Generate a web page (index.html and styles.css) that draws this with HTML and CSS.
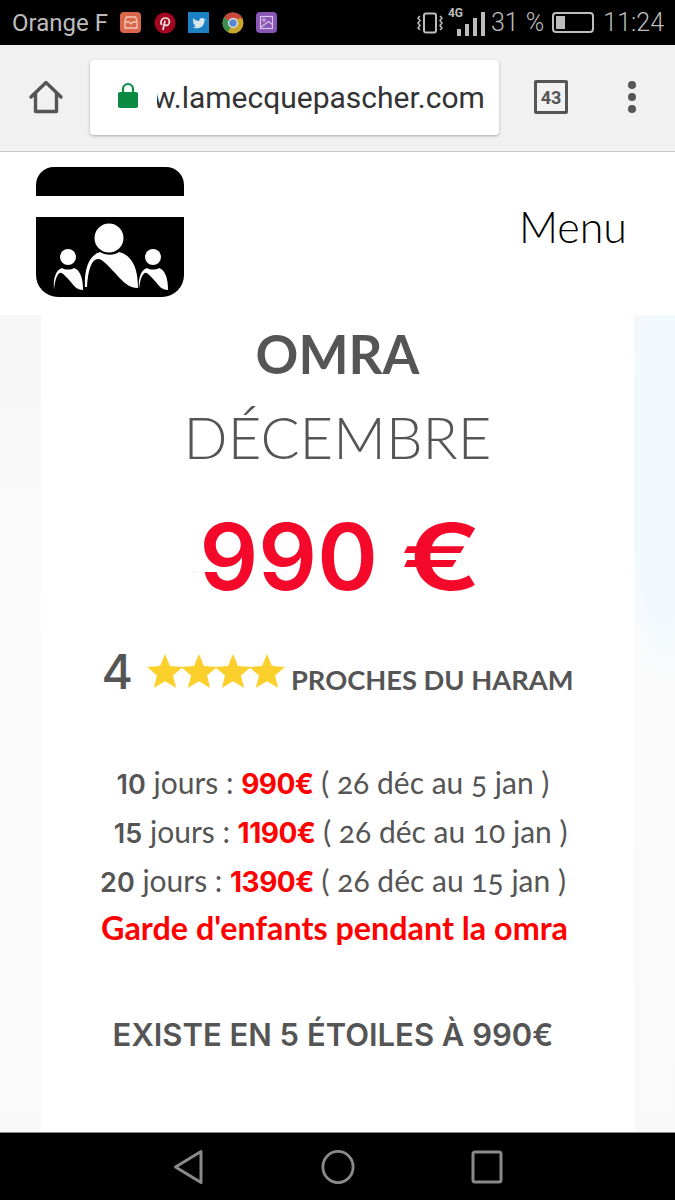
FILE: index.html
```html
<!DOCTYPE html>
<html lang="fr">
<head>
    <meta charset="UTF-8">
    <meta name="viewport" content="width=device-width, initial-scale=1.0">
    <title>OMRA Décembre</title>
    <link rel="stylesheet" href="styles.css">
</head>
<body>
    <!-- Status bar -->
    <div class="status-bar">
        <div class="status-left">
            <span class="carrier">Orange F</span>
            <svg class="notif" viewBox="0 0 22 22"><rect width="21" height="21" rx="4" fill="#d9654a"/><path d="M5 9l1.500-4h9l1.500 4v7H5zM5 10h4l2 2 2-2h4" fill="none" stroke="#f3c9b8" stroke-width="1.300"/></svg>
            <svg class="notif" viewBox="0 0 22 22"><circle cx="11" cy="11" r="10.500" fill="#a3071f"/><path d="M8 13c-2-2-1-7 3.500-7 3.500 0 4.500 3 3.500 5.500-1 2.300-3.500 2.500-4.500 1M11 8.500L9 18" fill="none" stroke="#f4e4e4" stroke-width="1.700"/></svg>
            <svg class="notif" viewBox="0 0 22 22"><rect width="21" height="21" fill="#1b80c4"/><path d="M4 15c5 3 12 1 12.500-6.500l1.500-1.500-1.800.3c-1-2-5-2-5 1.700-2.500 0-4.500-1-6-2.700-.7 1.500-.2 3 1 4l-1.200-.2c0 1.300 1 2.300 2.300 2.800h-1.300c.4 1 1.300 1.500 2.400 1.600-1.300.8-2.600 1-4.400.5z" fill="#d9e6ee"/></svg>
            <svg class="notif" viewBox="0 0 22 22"><circle cx="11" cy="11" r="10.500" fill="#c8a52c"/><path d="M11 11L2 5.500A10.500 10.500 0 0 1 20.500 6.500H11z" fill="#c9473c"/><path d="M11 11L6 20A10.500 10.500 0 0 1 2 5.500z" fill="#3d9150"/><circle cx="11" cy="11" r="5" fill="#e8e8e8"/><circle cx="11" cy="11" r="3.700" fill="#5a86d8"/></svg>
            <svg class="notif" viewBox="0 0 22 22"><rect width="21" height="21" rx="4" fill="#8a55b5"/><rect x="4.500" y="4.500" width="12" height="12" fill="none" stroke="#d8c5e6" stroke-width="1.200"/><circle cx="8" cy="8" r="1.300" fill="none" stroke="#d8c5e6"/><path d="M4.500 15.500l8-6 4 3" fill="none" stroke="#d8c5e6" stroke-width="1.200"/></svg>
        </div>
        <div class="status-right">
            <svg class="vibrate" viewBox="0 0 26 24"><rect x="7" y="2.500" width="12" height="19" rx="2" fill="none" stroke="#bdbdbd" stroke-width="2"/><path d="M3 5l-2 2 2 2.500-2 2.500 2 2.500-2 2.500 2 2M23 5l2 2-2 2.500 2 2.500-2 2.500 2 2.500-2 2" fill="none" stroke="#bdbdbd" stroke-width="1.500"/></svg>
            <div class="signal">
                <span class="net">4G</span>
                <span class="bar bar-1"></span>
                <span class="bar bar-2"></span>
                <span class="bar bar-3"></span>
                <span class="bar bar-4"></span>
            </div>
            <span class="status-text percent">31 %</span>
            <div class="battery"><span class="battery-level"></span></div>
            <span class="status-text">11:24</span>
        </div>
    </div>

    <!-- Browser toolbar -->
    <div class="toolbar">
        <svg class="home-icon" viewBox="0 0 36 36"><path d="M3 18L18 3.500 33 18M7.500 15v17.500h21V15" fill="none" stroke="#555" stroke-width="3.400" stroke-linejoin="round" stroke-linecap="round"/></svg>
        <div class="url-box">
            <svg class="lock" viewBox="0 0 20 26"><path d="M5 11V7a5 5 0 0 1 10 0v4" fill="none" stroke="#0b8a43" stroke-width="2.200"/><rect y="10" width="20" height="16" rx="2" fill="#0b8a43"/></svg>
            <div class="url-clip"><span class="url-text">w.lamecquepascher.com</span></div>
        </div>
        <div class="tabs-count">43</div>
        <div class="dots"><span></span><span></span><span></span></div>
    </div>

    <!-- Site header -->
    <header class="site-header">
        <svg class="logo" viewBox="0 0 148 131">
            <path d="M0 29V18A18 18 0 0 1 18 0h112a18 18 0 0 1 18 18v11z" fill="#000"/>
            <path d="M0 50h148v58a22 22 0 0 1-22 22H22a22 22 0 0 1-22-22z" fill="#000"/>
            <circle cx="73" cy="71" r="14.500" fill="#fff"/>
            <path d="M49 120c-1-20 5-32 15-35 4 3 14 4 19 0 12 3 19 14 19 36-9 0-15-6-22-14-8-8-13-15-18-15-6 0-10 10-11 28z" fill="#fff"/>
            <circle cx="32" cy="90" r="8" fill="#fff"/>
            <path d="M18 122c-1-11 2-19 8-21 3 2 9 2 12 0 6 2 9 10 9 22-6 0-9-4-13-9-4-4-8-9-10-8-3 1-5 7-6 16z" fill="#fff"/>
            <circle cx="117" cy="90" r="8" fill="#fff"/>
            <path d="M103 122c-1-11 2-19 8-21 3 2 9 2 12 0 6 2 9 10 9 22-6 0-9-4-13-9-4-4-8-9-10-8-3 1-5 7-6 16z" fill="#fff"/>
        </svg>
        <a class="menu-link" href="#">Menu</a>
    </header>

    <!-- Main Content -->
    <main class="page-bg">
        <section class="card">
            <h1 class="title">OMRA</h1>
            <h2 class="month">DÉCEMBRE</h2>
            <div class="price">990 <span class="euro">€</span></div>

            <div class="hotel">
                <span class="hotel-num">4</span>
                <div class="stars">
                    <svg class="star" viewBox="0 0 36 36"><path d="M18 1l5 12 13 1-10 8.500 3.200 12.500L18 28.300 6.800 35 10 22.500 0 14l13-1z"/></svg>
                    <svg class="star" viewBox="0 0 36 36"><path d="M18 1l5 12 13 1-10 8.500 3.200 12.500L18 28.300 6.800 35 10 22.500 0 14l13-1z"/></svg>
                    <svg class="star" viewBox="0 0 36 36"><path d="M18 1l5 12 13 1-10 8.500 3.200 12.500L18 28.300 6.800 35 10 22.500 0 14l13-1z"/></svg>
                    <svg class="star" viewBox="0 0 36 36"><path d="M18 1l5 12 13 1-10 8.500 3.200 12.500L18 28.300 6.800 35 10 22.500 0 14l13-1z"/></svg>
                </div>
                <span class="hotel-text">PROCHES DU HARAM</span>
            </div>

            <ul class="dates">
                <li><b>10</b> jours : <b class="red">990€</b> ( 26 déc au 5 jan )</li>
                <li>&nbsp;&nbsp;<b>15</b> jours : <b class="red">1190€</b> ( 26 déc au 10 jan )</li>
                <li><b>20</b> jours : <b class="red">1390€</b> ( 26 déc au 15 jan )</li>
            </ul>
            <p class="childcare">Garde d'enfants pendant la omra</p>
            <p class="five-stars">EXISTE EN 5 ÉTOILES À 990€</p>
        </section>
    </main>

    <!-- Navigation bar -->
    <nav class="nav-bar">
        <svg class="nav-icon" viewBox="0 0 34 36"><path d="M29 2.500v31L3.500 18z" fill="none" stroke="#8a8a8a" stroke-width="3" stroke-linejoin="round"/></svg>
        <svg class="nav-icon" viewBox="0 0 36 36"><ellipse cx="18" cy="18" rx="16" ry="16.500" fill="none" stroke="#8a8a8a" stroke-width="3"/></svg>
        <svg class="nav-icon" viewBox="0 0 34 36"><rect x="3" y="3" width="28" height="30" rx="2" fill="none" stroke="#8a8a8a" stroke-width="3"/></svg>
    </nav>
</body>
</html>
```

FILE: styles.css
```css
/* General Styles */
* {
    box-sizing: border-box;
}

body {
    background-color: #000;
    font-family: "Lato", "Open Sans", sans-serif;
    margin: 0;
    padding: 0;
    height: 1200px;
    overflow: hidden;
    display: flex;
    flex-direction: column;
}

/* Status bar */
.status-bar {
    height: 45px;
    flex: none;
    background-color: #000;
    color: #bdbdbd;
    font-family: "Roboto", sans-serif;
    display: flex;
    justify-content: space-between;
    align-items: center;
    padding: 0 11px 0 12px;
}

.status-left,
.status-right {
    display: flex;
    align-items: center;
}

.carrier {
    font-size: 24px;
    margin-right: 12px;
}

.notif {
    width: 22px;
    height: 22px;
    margin-right: 12px;
}

.vibrate {
    width: 26px;
    height: 24px;
    margin-right: 5px;
}

.signal {
    position: relative;
    width: 37px;
    height: 26px;
    display: flex;
    align-items: flex-end;
    gap: 4px;
    padding-left: 9px;
}

.net {
    position: absolute;
    left: 0;
    top: -4px;
    font-size: 12px;
    font-weight: 700;
}

.bar {
    width: 4px;
    background-color: #bdbdbd;
}

.bar-1 { height: 7px; }
.bar-2 { height: 12px; }
.bar-3 { height: 18px; }
.bar-4 { height: 24px; }

.status-text {
    font-size: 25px;
    font-weight: 300;
}

.percent {
    margin-left: 6px;
    word-spacing: 1px;
}

.battery {
    width: 42px;
    height: 21px;
    margin: 0 9px 0 8px;
    border: 2px solid #bdbdbd;
    border-radius: 4px;
    padding: 2px;
}

.battery-level {
    display: block;
    width: 9px;
    height: 100%;
    background-color: #bdbdbd;
}

/* Browser toolbar */
.toolbar {
    height: 107px;
    flex: none;
    background-color: #f1f1f1;
    border-bottom: 1px solid #c9c9c9;
    display: flex;
    align-items: center;
    padding: 0 0 2px 28px;
}

.home-icon {
    width: 36px;
    height: 36px;
}

.url-box {
    width: 409px;
    height: 75px;
    margin-left: 26px;
    background-color: #fff;
    border-radius: 4px;
    box-shadow: 0 1px 3px rgba(0, 0, 0, 0.3);
    display: flex;
    align-items: center;
    padding-left: 28px;
    overflow: hidden;
}

.lock {
    width: 20px;
    height: 26px;
    margin-top: -4px;
    flex: none;
}

.url-clip {
    margin-left: 19px;
    width: 330px;
    overflow: hidden;
}

.url-text {
    display: block;
    margin-left: -4px;
    font-family: "Roboto", sans-serif;
    font-size: 30px;
    color: #333;
    white-space: nowrap;
}

.tabs-count {
    width: 34px;
    height: 34px;
    margin-left: 35px;
    border: 3px solid #555;
    border-radius: 2px;
    color: #555;
    font-family: "Roboto", sans-serif;
    font-size: 18px;
    font-weight: 700;
    display: flex;
    align-items: center;
    justify-content: center;
}

.dots {
    margin-left: 60px;
    display: flex;
    flex-direction: column;
    gap: 4px;
}

.dots span {
    width: 8px;
    height: 8px;
    border-radius: 50%;
    background-color: #555;
}

/* Site header */
.site-header {
    height: 163px;
    flex: none;
    background-color: #fff;
    display: flex;
    justify-content: space-between;
    align-items: flex-start;
    padding: 15px 48px 0 36px;
}

.logo {
    width: 148px;
    height: 131px;
}

.menu-link {
    color: #000;
    font-size: 43px;
    font-weight: 300;
    line-height: 52px;
    margin-top: 34px;
    text-decoration: none;
}

/* Page */
.page-bg {
    flex: 1;
    min-height: 0;
    display: flex;
    justify-content: center;
    background-color: #f9f9f9;
    background-image:
        radial-gradient(ellipse 50px 220px at 665px 150px, #f2f9fd 0%, #f2f9fd 70%, transparent 100%),
        linear-gradient(180deg, #f6f6f6 0%, #fbfbfb 35%, #f9f9f9 100%);
}

.card {
    width: 593px;
    background-color: #fff;
    color: #555;
    text-align: center;
    padding-top: 7px;
}

.title {
    font-size: 53px;
    font-weight: 700;
    line-height: 64px;
    margin: 0;
}

.month {
    font-size: 58px;
    font-weight: 300;
    line-height: 70px;
    margin: 16px 0 0;
}

.price {
    font-family: "Inter", sans-serif;
    color: #f5092a;
    font-size: 92px;
    font-weight: 600;
    line-height: 110px;
    margin-top: 30px;
    padding-left: 5px;
}

.euro {
    display: inline-block;
    margin: 0 8px 0 9px;
    transform: scaleX(1.3);
}

.hotel {
    display: flex;
    justify-content: center;
    align-items: center;
    margin-top: 31px;
    height: 56px;
}

.hotel-num {
    font-family: "Inter", sans-serif;
    font-size: 48px;
    font-weight: 500;
    margin-right: 1px;
}

.stars {
    display: flex;
    margin: 0 8px 0 13px;
}

.star {
    width: 36px;
    height: 36px;
    margin-right: -2px;
    fill: #fcd02c;
}

.hotel-text {
    font-size: 27.300px;
    font-weight: 700;
    margin-top: 16px;
}

.dates {
    list-style: none;
    margin: 59px 0 0;
    padding: 0 9px 0 0;
    font-size: 30px;
    line-height: 49px;
    font-variant-numeric: oldstyle-nums;
}

.dates b {
    font-family: "Inter", sans-serif;
    font-size: 27px;
    font-weight: 600;
    line-height: 1;
    font-variant-numeric: lining-nums;
}

.dates .red {
    color: #f00;
    font-size: 28px;
    font-weight: 700;
    letter-spacing: -0.5px;
}

.childcare {
    color: #f00;
    font-size: 32.300px;
    font-weight: 700;
    line-height: 49px;
    margin: -2px 0 0;
    padding-right: 6px;
}

.five-stars {
    font-family: "Inter", sans-serif;
    font-size: 31px;
    font-weight: 600;
    line-height: 40px;
    margin: 63px 0 0;
    padding-right: 9px;
}

/* Navigation bar */
.nav-bar {
    height: 68px;
    flex: none;
    background-color: #000;
    border-top: 1px solid #888;
    display: flex;
    justify-content: center;
    align-items: center;
    gap: 115px;
}

.nav-icon {
    width: 34px;
    height: 36px;
}
```
